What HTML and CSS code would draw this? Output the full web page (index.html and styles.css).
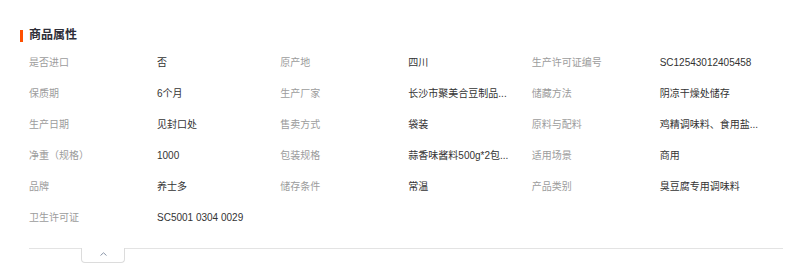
FILE: index.html
```html
<!DOCTYPE html>
<html lang="zh-CN">
<head>
<meta charset="utf-8">
<title>商品属性</title>
<link rel="stylesheet" href="styles.css">
</head>
<body>
<section class="attrs">
  <h2 class="title"><span class="bar"></span>商品属性</h2>
  <ul class="grid">
    <li class="item"><span class="k">是否进口</span><span class="v">否</span></li>
    <li class="item"><span class="k">原产地</span><span class="v">四川</span></li>
    <li class="item"><span class="k">生产许可证编号</span><span class="v">SC12543012405458</span></li>
    <li class="item"><span class="k">保质期</span><span class="v">6个月</span></li>
    <li class="item"><span class="k">生产厂家</span><span class="v">长沙市聚美合豆制品...</span></li>
    <li class="item"><span class="k">储藏方法</span><span class="v">阴凉干燥处储存</span></li>
    <li class="item"><span class="k">生产日期</span><span class="v">见封口处</span></li>
    <li class="item"><span class="k">售卖方式</span><span class="v">袋装</span></li>
    <li class="item"><span class="k">原料与配料</span><span class="v">鸡精调味料、食用盐...</span></li>
    <li class="item"><span class="k">净重（规格）</span><span class="v">1000</span></li>
    <li class="item"><span class="k">包装规格</span><span class="v">蒜香味酱料500g*2包...</span></li>
    <li class="item"><span class="k">适用场景</span><span class="v">商用</span></li>
    <li class="item"><span class="k">品牌</span><span class="v">养士多</span></li>
    <li class="item"><span class="k">储存条件</span><span class="v">常温</span></li>
    <li class="item"><span class="k">产品类别</span><span class="v">臭豆腐专用调味料</span></li>
    <li class="item"><span class="k">卫生许可证</span><span class="v">SC5001 0304 0029</span></li>
  </ul>
  <div class="divider">
    <div class="toggle">
      <svg class="chev" width="7" height="4" viewBox="0 0 7 4"><polyline points="0.5,3.5 3.5,0.8 6.5,3.5" fill="none" stroke="#8a96a8" stroke-width="1"/></svg>
    </div>
  </div>
</section>
</body>
</html>
```

FILE: styles.css
```css
* { box-sizing: border-box; }
html, body { margin: 0; padding: 0; background: #fff; }
body {
  font-family: "Liberation Sans", "Noto Sans CJK SC", sans-serif;
  color: #333;
}
.attrs {
  padding: 29px 21px 0 29px;
}
.title {
  display: flex;
  align-items: center;
  margin: 0;
  height: 13px;
  line-height: 13px;
  font-size: 12px;
  font-weight: bold;
  color: #2e2e38;
}
.bar {
  width: 3px;
  height: 12px;
  margin-left: -9px;
  margin-right: 6px;
  background: #ff5000;
}
.grid {
  list-style: none;
  margin: 5px 0 0;
  padding: 0;
  display: grid;
  grid-template-columns: repeat(3, 1fr);
}
.item {
  display: flex;
  height: 31px;
  line-height: 31px;
  font-size: 10px;
  white-space: nowrap;
}
.k {
  flex: 0 0 128px;
  color: #9c9c9c;
}
.v {
  color: #333;
}
.divider {
  margin-top: 15px;
  border-top: 1px solid #e3e3e3;
}
.toggle {
  display: flex;
  justify-content: center;
  align-items: flex-start;
  margin: -1px 0 0 52px;
  width: 44px;
  height: 15px;
  padding-top: 4px;
  background: #fff;
  border: 1px solid #dcdcdc;
  border-top: none;
  border-radius: 0 0 4px 4px;
}
.chev { display: block; }
```
